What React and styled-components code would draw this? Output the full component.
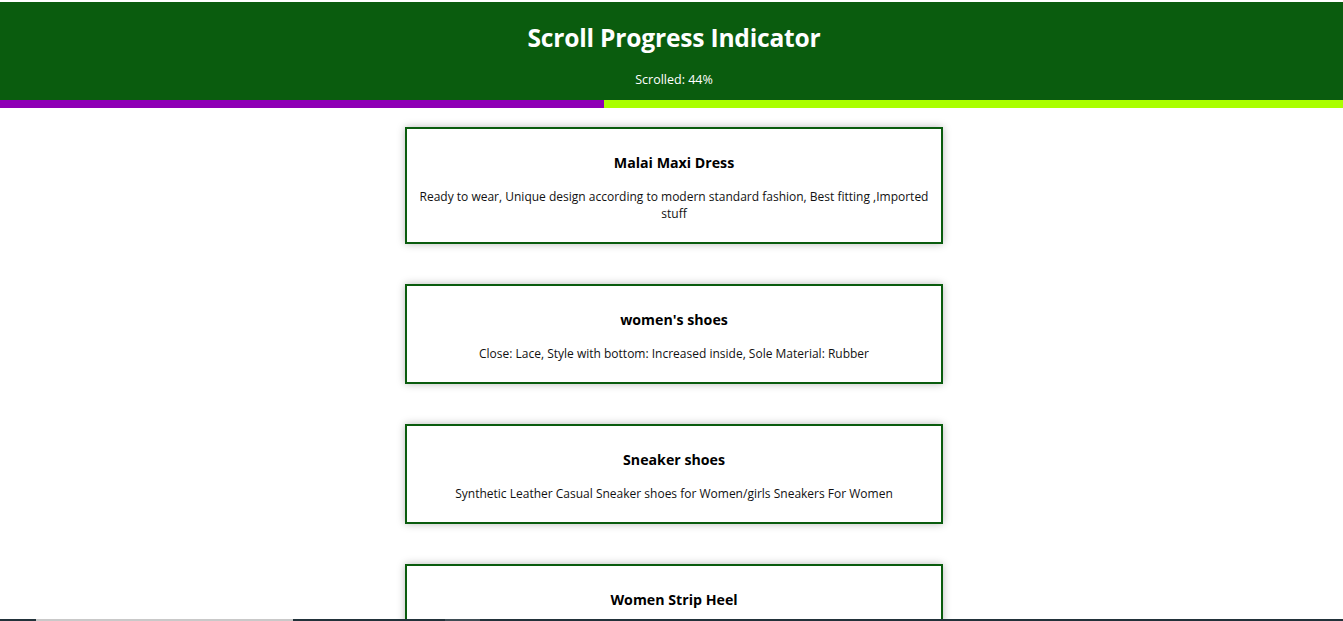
import React from "react";
import styled, { createGlobalStyle } from "styled-components";

const GlobalStyle = createGlobalStyle`
  html, body {
    margin: 0;
    padding: 0;
    overflow: hidden;
    background: #fff;
  }
  body {
    font-family: "Open Sans", "Noto Sans", sans-serif;
    color: #000;
  }
  * {
    box-sizing: border-box;
  }
`;

const Page = styled.div`
  padding-top: 2px;
`;

const Header = styled.header`
  background: #0a5c0e;
  color: #fff;
  text-align: center;
  padding: 19px 0 12px;
`;

const Title = styled.h1`
  margin: 0 0 0 5px;
  font-size: 24.6px;
  line-height: 34px;
  font-weight: 700;
  letter-spacing: -0.2px;
`;

const Scrolled = styled.p`
  margin: 16px 0 0 5px;
  font-size: 12.5px;
  line-height: 17px;
`;

const Track = styled.div`
  height: 8px;
  background: #aaff00;
`;

const Fill = styled.div`
  height: 100%;
  background: #8e00b5;
`;

const List = styled.main`
  display: flex;
  flex-direction: column;
  align-items: center;
  gap: 40px;
  padding: 19px 0 40px 5px;
`;

const Card = styled.section`
  width: 538px;
  border: 2px solid #0a5c0e;
  box-shadow: 0 0 8px rgba(0, 0, 0, 0.28);
  padding: 24px 8px 20px;
  text-align: center;
  background: #fff;
`;

const CardTitle = styled.h3`
  margin: 0 0 15px;
  font-size: 14.2px;
  line-height: 20px;
  font-weight: 700;
`;

const CardText = styled.p`
  margin: 0;
  font-size: 12px;
  line-height: 17px;
  color: #111;
`;

const BottomBar = styled.div`
  position: fixed;
  left: 0;
  right: 0;
  bottom: 0;
  height: 2px;
  background: #22323a;
`;

const Thumb = styled.div`
  position: absolute;
  top: 0;
  left: ${(p) => p.$left}px;
  width: ${(p) => p.$width}px;
  height: 100%;
  background: ${(p) => p.$color};
`;

const products = [
  {
    title: "Malai Maxi Dress",
    text: "Ready to wear, Unique design according to modern standard fashion, Best fitting ,Imported stuff",
  },
  {
    title: "women's shoes",
    text: "Close: Lace, Style with bottom: Increased inside, Sole Material: Rubber",
  },
  {
    title: "Sneaker shoes",
    text: "Synthetic Leather Casual Sneaker shoes for Women/girls Sneakers For Women",
  },
  {
    title: "Women Strip Heel",
    text: "Material: Faux Leather, Heel Height: 2 inches, Occasion: Casual",
  },
];

export default function App() {
  const progress = 45;
  return (
    <Page>
      <GlobalStyle />
      <Header>
        <Title>Scroll Progress Indicator</Title>
        <Scrolled>Scrolled: 44%</Scrolled>
      </Header>
      <Track>
        <Fill style={{ width: `${progress}%` }} />
      </Track>
      <List>
        {products.map((p) => (
          <Card key={p.title}>
            <CardTitle>{p.title}</CardTitle>
            <CardText>{p.text}</CardText>
          </Card>
        ))}
      </List>
      <BottomBar>
        <Thumb $left={36} $width={257} $color="#c9c9c9" />
        <Thumb $left={445} $width={35} $color="#3f4d55" />
      </BottomBar>
    </Page>
  );
}
